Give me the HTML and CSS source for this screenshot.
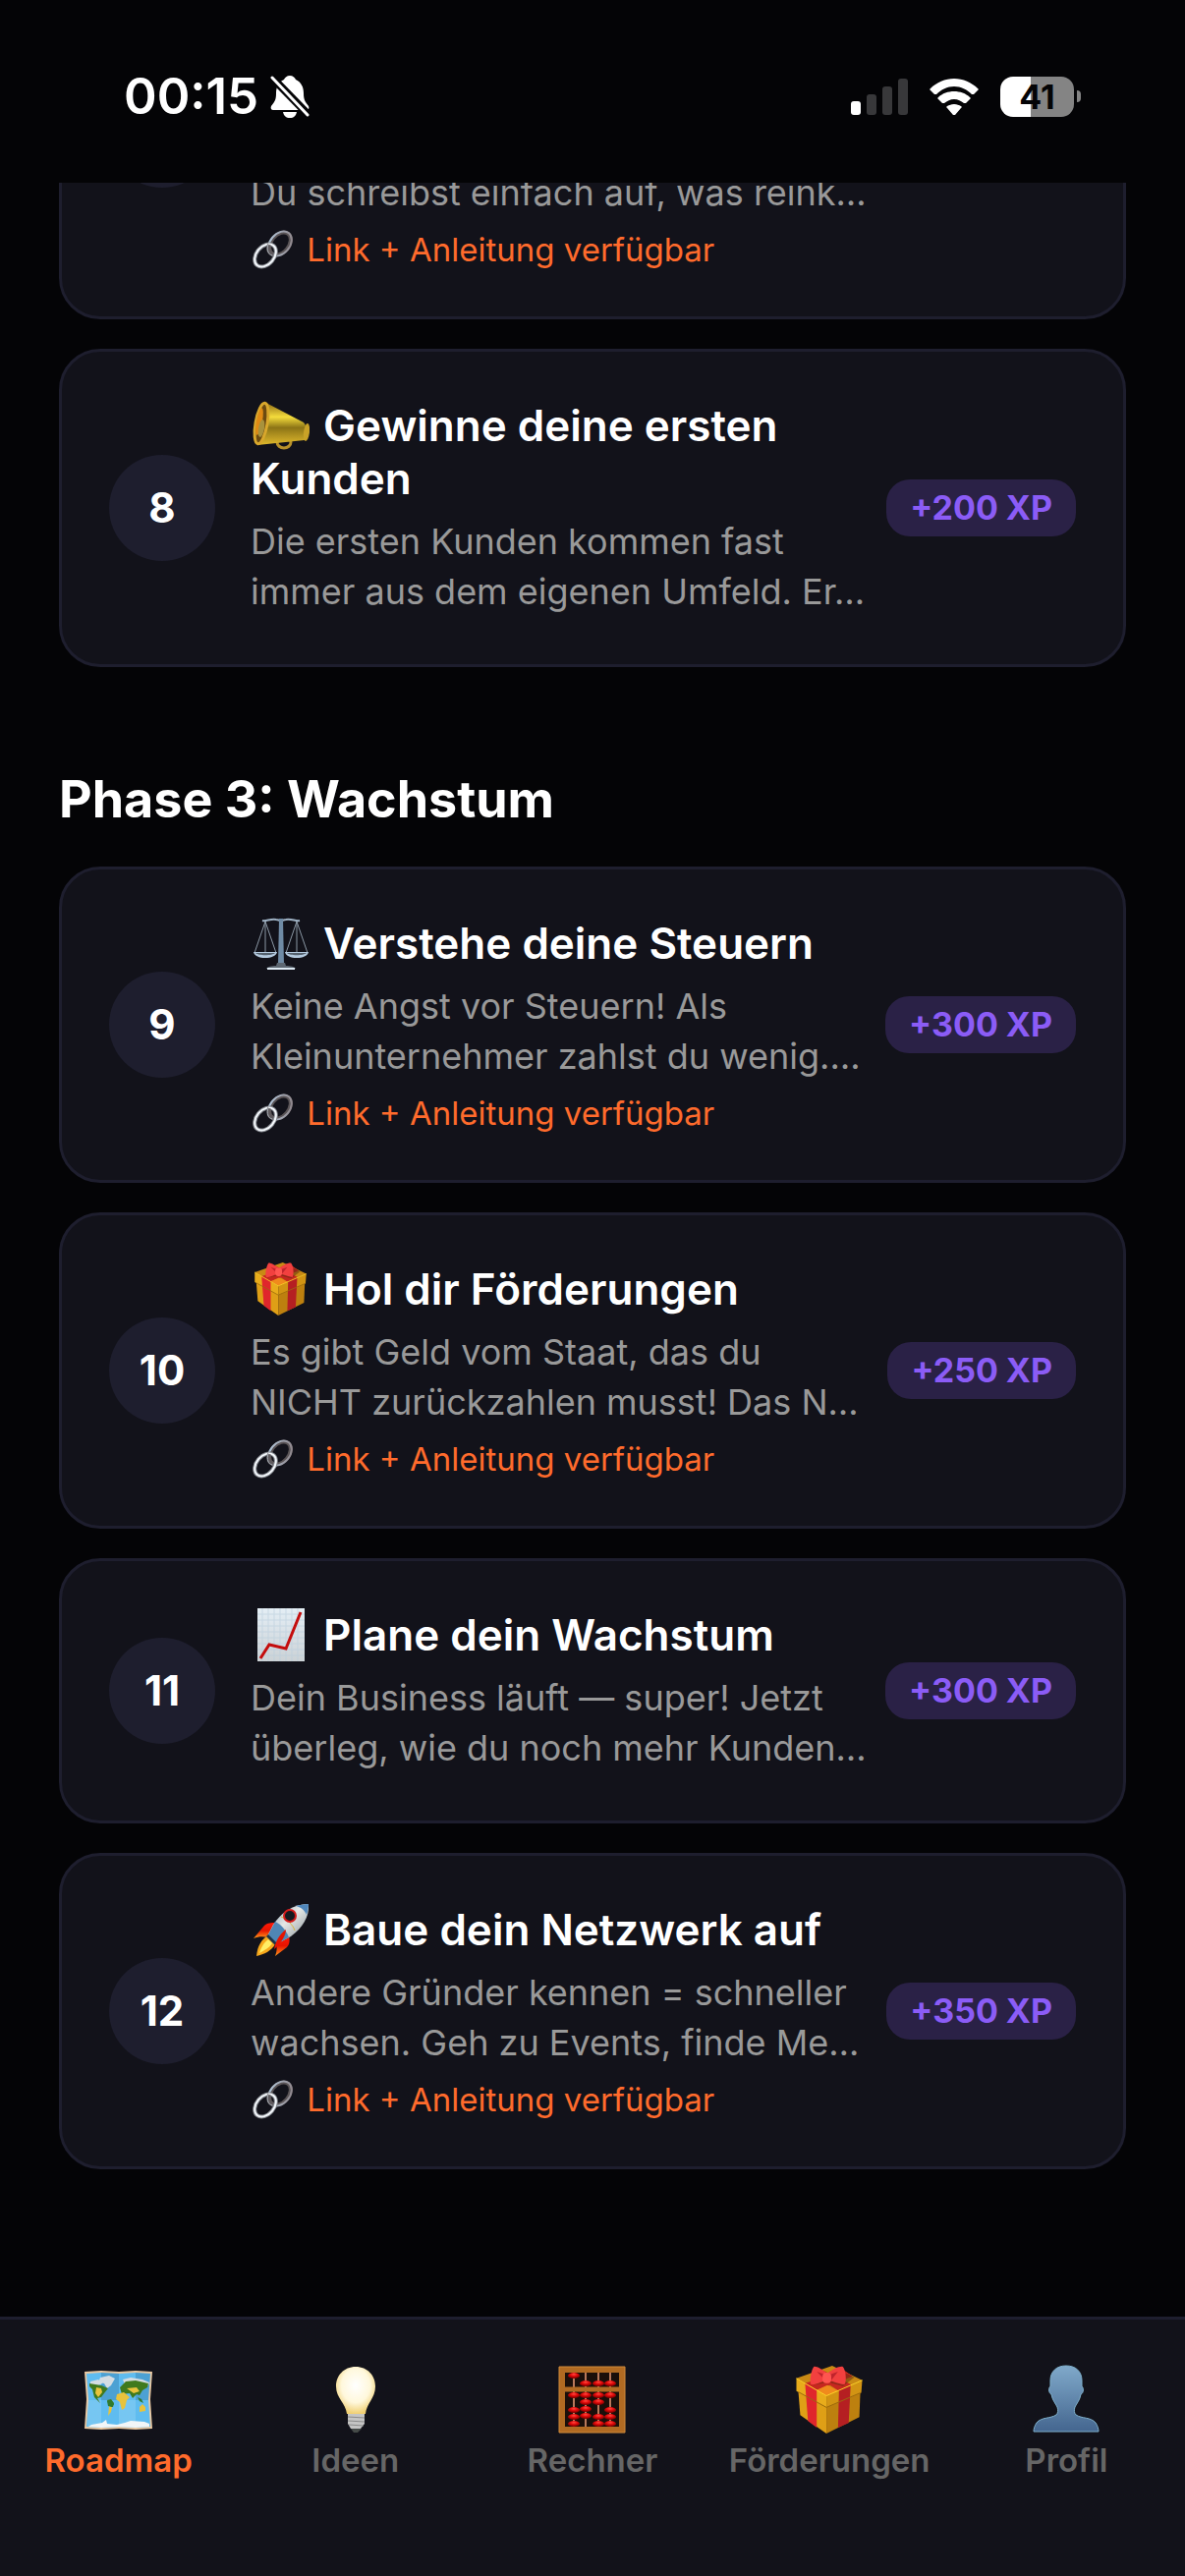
FILE: index.html
```html
<!DOCTYPE html>
<html lang="de">

<head>
    <meta charset="utf-8" />
    <title>Roadmap</title>
    <meta name="viewport" content="width=device-width, initial-scale=1">
    <link rel="stylesheet" href="styles.css">
</head>

<body>
    <!-- shared icons -->
    <svg class="sprite" aria-hidden="true">
        <defs>
            <linearGradient id="gold" x1="0" y1="0" x2="0" y2="1">
                <stop offset="0" stop-color="#8a6412" />
                <stop offset=".35" stop-color="#f4dc3c" />
                <stop offset=".6" stop-color="#8c7416" />
                <stop offset="1" stop-color="#e0b92c" />
            </linearGradient>
            <linearGradient id="steelDark" x1="0" y1="0" x2="1" y2="1">
                <stop offset="0" stop-color="#b9d3ea" />
                <stop offset="1" stop-color="#8a7d80" />
            </linearGradient>
            <linearGradient id="paper" x1="0" y1="0" x2="0" y2="1">
                <stop offset="0" stop-color="#e4eef5" />
                <stop offset="1" stop-color="#ccd2d6" />
            </linearGradient>
            <linearGradient id="hull" x1="0" y1="0" x2="1" y2="1">
                <stop offset="0" stop-color="#6f8ba6" />
                <stop offset=".45" stop-color="#e6e8e6" />
                <stop offset="1" stop-color="#7b8890" />
            </linearGradient>
            <linearGradient id="fin" x1="0" y1="0" x2="0" y2="1">
                <stop offset="0" stop-color="#ff1a08" />
                <stop offset=".5" stop-color="#e61400" />
                <stop offset="1" stop-color="#ff9a1a" />
            </linearGradient>
            <radialGradient id="glow" cx=".5" cy=".4" r=".6">
                <stop offset="0" stop-color="#ffffff" />
                <stop offset=".6" stop-color="#fff8dc" />
                <stop offset="1" stop-color="#f0cf72" />
            </radialGradient>
            <linearGradient id="person" x1="0" y1="0" x2="0" y2="1">
                <stop offset="0" stop-color="#80a9ca" />
                <stop offset="1" stop-color="#44668f" />
            </linearGradient>
            <radialGradient id="beadFill" cx=".5" cy=".3" r=".6">
                <stop offset="0" stop-color="#ff4a40" />
                <stop offset=".5" stop-color="#e30b0b" />
                <stop offset="1" stop-color="#8c0000" />
            </radialGradient>
        </defs>
        <symbol id="gift" viewBox="0 0 68 70">
            <path fill="#c98a14" d="M0 13 37 0 68 15 31 31z" />
            <path fill="#c6271f" d="M9 18 50 5 58 11 21 25z" />
            <path fill="#c6271f" d="M16 8 28 5 58 20 44 26z" />
            <path fill="#f08a1c" d="M21 25 32 20 44 26 31 31z" />
            <path fill="#df9f16" d="M2 26 31 42v28L4 51z" />
            <path fill="#bd800f" d="M31 42 66 28 65 53 31 70z" />
            <path fill="#e8ac1b" d="M0 13 31 31v12L0 26z" />
            <path fill="#d29413" d="M31 31 68 15 67 28 31 43z" />
            <path fill="#e0262c" d="M9 18 21 25v39l-9-7z" />
            <path fill="#b51f22" d="M44 25 56 20 54 59 43 64z" />
            <path fill="none" stroke="#ffd42a" d="M0 13 31 31 68 15" />
            <path fill="none" stroke="#9a690c" d="M2 27 31 43 66 28" />
            <path fill="#5b2a10" opacity=".5" d="M16 20 33 17 48 21 60 12 52 8z" />
            <path fill="#f2403f" d="M32 8C26 3 20 0 18 1c-2 2-5 14-3 18 3 2 11-3 17-4z" />
            <path fill="#f2403f" d="M32 8c6-5 13-8 16-7 3 3 4 15 2 18-4 1-11-3-18-4z" />
            <path fill="#c0242c" d="M32 10 21 6l8 8zM32 10l11-4-7 9z" />
            <rect fill="#ff5550" x="27" y="7" width="9" height="11" rx="4" />
        </symbol>
        <symbol id="link" viewBox="0 0 45 40">
            <g fill="none">
                <ellipse cx="30" cy="14" rx="13" ry="9" transform="rotate(-50 30 14)" stroke="#5a5456" stroke-width="4" />
                <ellipse cx="30" cy="14" rx="14" ry="10" transform="rotate(-50 30 14)" stroke="url(#steelDark)" stroke-width="2" />
                <ellipse cx="15" cy="26" rx="13" ry="9" transform="rotate(-50 15 26)" stroke="#85888f" stroke-width="4" />
                <ellipse cx="15" cy="26" rx="13" ry="9" transform="rotate(-50 15 26)" stroke="#f4f8fc" stroke-width="2" />
                <path stroke="#5f5a5e" stroke-width="4" d="M19 15c-2 5 0 9 4 10" />
                <path stroke="#a9b0b8" d="M18 15c-2 5 0 10 4 11" />
            </g>
        </symbol>
    </svg>

    <header class="status-bar">
        <div class="clock">
            <span>00:15</span>
            <svg class="bell" viewBox="0 0 40 44" aria-label="Stumm">
                <path fill="#fff" d="M20 1c3 0 5 2 6 4 6 3 8 8 8 14 0 7 2 9 5 13 1 2 0 4-2 4H3c-2 0-3-2-2-4 4-5 5-7 5-13C6 12 9 7 14 5c1-2 3-4 6-4z" />
                <path fill="#fff" d="M13 38h14c-1 4-3 6-7 6s-6-2-7-6z" />
                <path stroke="#040406" stroke-width="8" d="M0 1 41 43" />
                <path stroke="#fff" stroke-width="3" stroke-linecap="round" d="M2 3 38 41" />
            </svg>
        </div>
        <div class="status-icons">
            <svg class="signal" viewBox="0 0 58 37" aria-label="Empfang">
                <rect x="0" y="23" width="10" height="14" rx="3" fill="#fff" />
                <rect x="16" y="16" width="10" height="21" rx="3" fill="#38383a" />
                <rect x="32" y="8" width="10" height="29" rx="3" fill="#38383a" />
                <rect x="48" y="0" width="10" height="37" rx="3" fill="#38383a" />
            </svg>
            <svg class="wifi" viewBox="0 0 50 37" aria-label="WLAN">
                <path fill="#fff" d="M25 0c9 0 18 4 24 10 1 1 1 1 0 2l-4 4c-1 0-1 0-2 0C38 11 32 8 25 8S12 11 7 16c-1 0-1 0-2 0l-4-4c-1-1-1-1 0-2C7 4 16 0 25 0z" />
                <path fill="#fff" d="M25 13c6 0 12 2 16 6 1 1 1 1 0 2l-4 4c-1 0-1 0-2 0-3-2-6-4-10-4s-7 2-10 4c-1 0-1 0-2 0l-4-4c-1-1-1-1 0-2 4-4 10-6 16-6z" />
                <path fill="#fff" d="M25 26c3 0 5 1 7 2 1 1 1 1 0 2l-6 7c-1 0-1 0-2 0l-6-7c-1-1-1-1 0-2 2-1 4-2 7-2z" />
            </svg>
            <div class="battery"><span class="battery-level">41</span></div>
        </div>
    </header>

    <main class="roadmap">
        <a class="step step-scrolled" href="#step7">
            <span class="step-number"></span>
            <div class="step-body">
                <p>Du schreibst einfach auf, was reink…</p>
                <div class="step-link"><svg class="link-icon"><use href="#link" /></svg> Link + Anleitung verfügbar</div>
            </div>
        </a>
        <a class="step" href="#step8">
            <span class="step-number">8</span>
            <div class="step-body">
                <h3>
                    <svg class="title-icon" viewBox="0 0 60 54">
                        <ellipse cx="34" cy="44" rx="7" ry="6" fill="none" stroke="#b8912a" stroke-width="3" />
                        <path fill="url(#gold)" d="M14 3 54 24c4 4 4 13 1 18L7 47z" />
                        <ellipse cx="57" cy="34" rx="3" ry="9" fill="#c9a227" transform="rotate(7 57 34)" />
                        <ellipse cx="11" cy="25" rx="6" ry="21" fill="#6b4a10" stroke="#d8a72c" stroke-width="3" transform="rotate(10 11 25)" />
                        <ellipse cx="9" cy="23" rx="3" ry="14" fill="#e08a14" transform="rotate(10 9 23)" />
                        <ellipse cx="11" cy="30" rx="3" ry="9" fill="#a8923c" transform="rotate(10 11 30)" />
                    </svg>
                    Gewinne deine ersten Kunden
                </h3>
                <p>Die ersten Kunden kommen fast<br>immer aus dem eigenen Umfeld. Er…</p>
            </div>
            <span class="xp">+200 XP</span>
        </a>

        <h2>Phase 3: Wachstum</h2>

        <a class="step" href="#step9">
            <span class="step-number">9</span>
            <div class="step-body">
                <h3>
                    <svg class="title-icon" viewBox="0 0 60 54">
                        <g fill="none" stroke="#8b98a5">
                            <path stroke-width="2" stroke="#9fb2c4" d="M12 4c4 1 8-2 14-1 2 0 3 1 5 1s3-1 5-1c6-1 10 2 14 1" />
                            <path d="M15 5 4 37M15 5v32M15 5l11 32M47 5 36 37M47 5v32M47 5l11 32" />
                        </g>
                        <path fill="#6f8ba5" d="M29 2h4l1 47h-6z" />
                        <path fill="#b3c9de" d="M3 36h24c-1 4-6 6-12 6S4 40 3 36zM35 36h24c-1 4-6 6-12 6s-11-2-12-6z" />
                        <path fill="#54616e" d="M5 37h20c-3 3-17 3-20 0zM37 37h20c-3 3-17 3-20 0z" />
                        <path fill="#5d6772" d="M27 47h8l1 3c5 0 9 1 10 3H16c1-2 5-3 10-3z" />
                        <path stroke="#dce8f2" stroke-width="2" d="M17 53h28" />
                    </svg>
                    Verstehe deine Steuern
                </h3>
                <p>Keine Angst vor Steuern! Als<br>Kleinunternehmer zahlst du wenig.…</p>
                <div class="step-link"><svg class="link-icon"><use href="#link" /></svg> Link + Anleitung verfügbar</div>
            </div>
            <span class="xp">+300 XP</span>
        </a>
        <a class="step" href="#step10">
            <span class="step-number">10</span>
            <div class="step-body">
                <h3>
                    <svg class="title-icon" viewBox="0 0 60 54"><use href="#gift" x="3" y="0" width="55" height="54" /></svg>
                    Hol dir Förderungen
                </h3>
                <p>Es gibt Geld vom Staat, das du<br>NICHT zurückzahlen musst! Das N…</p>
                <div class="step-link"><svg class="link-icon"><use href="#link" /></svg> Link + Anleitung verfügbar</div>
            </div>
            <span class="xp">+250 XP</span>
        </a>
        <a class="step" href="#step11">
            <span class="step-number">11</span>
            <div class="step-body">
                <h3>
                    <svg class="title-icon" viewBox="0 0 60 54">
                        <rect x="7" y="0" width="48" height="54" fill="url(#paper)" />
                        <path stroke="#b9cedd" opacity=".6" d="M12 0v54M18 0v54M24 0v54M30 0v54M36 0v54M42 0v54M48 0v54M7 6h48M7 12h48M7 18h48M7 24h48M7 30h48M7 36h48M7 42h48M7 48h48" />
                        <path fill="none" stroke="#c40d0d" stroke-width="3" d="M10 51 19 37 36 41 51 4" />
                    </svg>
                    Plane dein Wachstum
                </h3>
                <p>Dein Business läuft — super! Jetzt<br>überleg, wie du noch mehr Kunden…</p>
            </div>
            <span class="xp">+300 XP</span>
        </a>
        <a class="step" href="#step12">
            <span class="step-number">12</span>
            <div class="step-body">
                <h3>
                    <svg class="title-icon" viewBox="0 0 60 54">
                        <path fill="url(#fin)" d="M26 20c-5 0-9 0-12 3L3 36c5-2 10-2 14-1z" />
                        <path fill="url(#fin)" d="M39 33c1 5 1 9-2 12l-12 9c2-5 2-9 1-13z" />
                        <path fill="#f6a81c" d="M17 34c-6 3-10 10-11 20 8-2 15-5 19-12z" />
                        <path fill="#ffee66" d="M18 37c-5 4-7 8-9 14 5-3 10-5 13-10z" />
                        <path fill="url(#hull)" d="M59 1c1 13-6 24-18 33l-15 8-9-8 6-12C31 10 43 1 59 1z" />
                        <path fill="#4f86bb" d="M59 1c0 4-1 8-2 11-2-5-6-8-11-9 4-1 8-2 13-2z" />
                        <path fill="#4f86b5" d="M25 19c5 2 11 8 14 16l-13 7-9-8z" />
                        <path fill="#1e3347" d="M18 32l9 9-2 2-9-9z" />
                        <path fill="none" stroke="#d8b23c" d="M31 14c6 2 12 8 14 14" />
                        <circle cx="40" cy="13" r="6" fill="#151a20" stroke="#d31b1b" stroke-width="2" />
                        <path fill="#e61400" d="M36 27c0 6-5 14-12 20 1-7 5-15 12-20z" />
                    </svg>
                    Baue dein Netzwerk auf
                </h3>
                <p>Andere Gründer kennen = schneller<br>wachsen. Geh zu Events, finde Me…</p>
                <div class="step-link"><svg class="link-icon"><use href="#link" /></svg> Link + Anleitung verfügbar</div>
            </div>
            <span class="xp">+350 XP</span>
        </a>
    </main>

    <nav class="tabs">
        <a class="tab active" href="#roadmap">
            <svg viewBox="0 0 72 72">
                <path fill="#e8c9a4" d="M1 8l17-1 18 1 17-1 17 1-2 28 2 30-17 1-17-1-18 1-17-1 2-30z" />
                <path fill="#5fbcf0" d="M3 10l15-1 18 1 17-1 15 1-2 26 2 28-15 1-17-1-18 1-15-1 2-28z" />
                <path fill="#2b6f9e" opacity=".35" d="M18 9l18 1v27H18zM53 9l15 1-2 27H53z" />
                <path fill="#ffffff" opacity=".15" d="M4 37h14v27H4zM36 37h17v28l-17-1z" />
                <path fill="#d5dde2" d="M17 14l9-2 6 3-4 7-4 3-3-5-6-1zM7 18l8-2 4 4-6 3-6-1zM40 16l8-2 12 2 7 3-1 3-24-1z" />
                <path fill="#3f7a1e" d="M6 20l12 2 7 3-4 5-3 4-4 1 3 5-6-6-2-8-3-3zM37 24l6-6 10-1 13 3-1 4-5 3-3 5-3-1-4 4-3-5-8 1zM24 37l4-1 3 4-1 4-4-1z" />
                <path fill="#e8c33c" d="M13 24l5 1 1 4-4 5-3-4zM34 31l7-2 6 5-3 3-2 8-3 2-2-8-4-3zM26 43l3 1-1 5-3 4zM57 44l3-3 3 3v4l-6 1zM44 25l10-1 3 4-6 2z" />
                <path fill="#2f7a2c" d="M24 38l4-1 3 4-2 3-4-1zM55 34l4 2 2 4-4-2z" />
                <path fill="#f2f6f8" d="M8 62l11-2 4-3 1 4 10 1 8-2 6-2 14 1 5 2v3l-14 1-17-1-18 1-13-1z" />
            </svg>
            <span>Roadmap</span>
        </a>
        <a class="tab" href="#ideen">
            <svg viewBox="0 0 72 72">
                <path fill="url(#glow)" d="M36 3c12 0 20 9 20 20 0 12-9 17-10 28H27C26 40 16 35 16 23 16 12 24 3 36 3z" />
                <path fill="#c4c4c4" d="M28 51h17v10l-4 5H31l-3-5z" />
                <path stroke="#8a8a8a" stroke-width="1" d="M28 54l17 1M28 58l17 1M29 62l15 1" />
                <path fill="#454a48" d="M31 66h11l-4 4h-4z" />
            </svg>
            <span>Ideen</span>
        </a>
        <a class="tab" href="#rechner">
            <svg viewBox="0 0 72 72">
                <rect x="5" y="6" width="61" height="61" fill="#1a0f0a" stroke="#b06a22" stroke-width="6" />
                <path stroke="#d08a3a" fill="none" d="M2 3h67v67H2z" />
                <path stroke="#b9785a" stroke-width="2" d="M17 9v55M29 9v55M42 9v55M54 9v55" />
                <path stroke="#b06a22" stroke-width="5" d="M8 26h55" />
                <g fill="url(#beadFill)">
                    <ellipse cx="17" cy="12" rx="6" ry="3" />
                    <ellipse cx="29" cy="20" rx="6" ry="3" />
                    <ellipse cx="42" cy="20" rx="6" ry="3" />
                    <ellipse cx="54" cy="20" rx="6" ry="3" />
                    <ellipse cx="17" cy="32" rx="6" ry="3" />
                    <ellipse cx="17" cy="47" rx="6" ry="3" />
                    <ellipse cx="17" cy="54" rx="6" ry="3" />
                    <ellipse cx="17" cy="61" rx="6" ry="3" />
                    <ellipse cx="29" cy="32" rx="6" ry="3" />
                    <ellipse cx="29" cy="39" rx="6" ry="3" />
                    <ellipse cx="29" cy="46" rx="6" ry="3" />
                    <ellipse cx="29" cy="53" rx="6" ry="3" />
                    <ellipse cx="42" cy="32" rx="6" ry="3" />
                    <ellipse cx="42" cy="39" rx="6" ry="3" />
                    <ellipse cx="42" cy="54" rx="6" ry="3" />
                    <ellipse cx="42" cy="61" rx="6" ry="3" />
                    <ellipse cx="54" cy="32" rx="6" ry="3" />
                    <ellipse cx="54" cy="47" rx="6" ry="3" />
                    <ellipse cx="54" cy="54" rx="6" ry="3" />
                    <ellipse cx="54" cy="61" rx="6" ry="3" />
                </g>
            </svg>
            <span>Rechner</span>
        </a>
        <a class="tab" href="#foerderungen">
            <svg viewBox="0 0 72 72"><use href="#gift" x="2" y="2" width="68" height="69" /></svg>
            <span>Förderungen</span>
        </a>
        <a class="tab" href="#profil">
            <svg viewBox="0 0 72 72">
                <path fill="url(#person)" stroke="#7fb0cc" stroke-width="1" d="M36 2c10 0 16 6 16 15v6c2 1 2 7-1 8-1 6-4 9-6 13-1 3-1 6 1 8 6 4 15 2 20 8 2 3 3 6 3 9H3c0-3 1-6 3-9 5-6 14-4 20-8 2-2 2-5 1-8-2-4-5-7-6-13-3-1-3-7-1-8v-6c0-9 6-15 16-15z" />
            </svg>
            <span>Profil</span>
        </a>
    </nav>
</body>

</html>
```
FILE: styles.css
```css
* {
    box-sizing: border-box;
}

body {
    margin: 0;
    height: 100vh;
    display: flex;
    flex-direction: column;
    background: #040406;
    color: #fff;
    font-family: Inter, "Liberation Sans", sans-serif;
}

a {
    color: inherit;
    text-decoration: none;
}

h2, h3, p {
    margin: 0;
}

.sprite {
    position: absolute;
    width: 0;
    height: 0;
}

.status-bar {
    flex: none;
    display: flex;
    justify-content: space-between;
    align-items: flex-start;
    height: 186px;
    padding: 68px 106px 0 126px;
}

.clock {
    display: flex;
    align-items: center;
    gap: 12px;
    font-size: 51px;
    line-height: 60px;
    font-weight: 600;
}

.bell {
    width: 40px;
    height: 44px;
}

.status-icons {
    display: flex;
    align-items: center;
    gap: 22px;
    height: 60px;
}

.signal {
    width: 58px;
    height: 37px;
}

.wifi {
    width: 50px;
    height: 37px;
}

.battery {
    display: flex;
    align-items: center;
}

.battery-level {
    width: 75px;
    border-radius: 13px;
    background: linear-gradient(90deg, #fff 41%, #848484 41%);
    color: #040406;
    font-size: 34px;
    line-height: 41px;
    font-weight: 700;
    text-align: center;
}

.battery::after {
    content: "";
    width: 4px;
    height: 12px;
    margin-left: 3px;
    border-radius: 0 4px 4px 0;
    background: #848484;
}

/* list is scrolled to its end */
.roadmap {
    flex: 1;
    min-height: 0;
    overflow: hidden;
    display: flex;
    flex-direction: column;
    justify-content: flex-end;
    gap: 30px;
    padding: 0 60px 150px;
}

.roadmap h2 {
    margin: 72px 0 5px;
    font-size: 52px;
    line-height: 66px;
    font-weight: 700;
}

.step {
    flex: none;
    display: flex;
    align-items: center;
    padding: 48px;
    border: 3px solid #1e1e2e;
    border-radius: 42px;
    background: #12121a;
}

/* upper part is out of view */
.step-scrolled {
    min-height: 376px;
}

.step-scrolled .step-body {
    align-self: flex-end;
}

.step-number {
    flex: none;
    width: 108px;
    height: 108px;
    margin-right: 36px;
    border-radius: 50%;
    background: #1e1e2e;
    font-size: 42px;
    line-height: 108px;
    font-weight: 700;
    text-align: center;
}

.step-body {
    flex: 1;
    min-width: 0;
}

.step-body h3 {
    font-size: 44px;
    line-height: 54px;
    font-weight: 600;
}

.title-icon {
    width: 60px;
    height: 54px;
    margin-right: 3px;
    vertical-align: top;
}

.step-body p {
    margin-top: 12px;
    color: #999;
    font-size: 36px;
    line-height: 51px;
    white-space: nowrap;
}

.step-link {
    margin-top: 12px;
    color: #ff6b2c;
    font-size: 33px;
    line-height: 40px;
}

.link-icon {
    width: 45px;
    height: 40px;
    margin-right: 3px;
    vertical-align: top;
}

.xp {
    flex: none;
    margin-left: 24px;
    padding: 9px 24px;
    border-radius: 24px;
    background: #2a2146;
    color: #8b5cf6;
    font-size: 34px;
    line-height: 40px;
    font-weight: 700;
}

.tabs {
    flex: none;
    display: grid;
    grid-template-columns: repeat(5, 1fr);
    padding: 45px 0 98px;
    border-top: 3px solid #1e1e2e;
    background: #12121a;
}

.tab {
    display: flex;
    flex-direction: column;
    align-items: center;
    gap: 6px;
    color: #666;
    font-size: 33px;
    line-height: 40px;
    font-weight: 600;
}

.tab svg {
    width: 72px;
    height: 72px;
}

.tab.active {
    color: #ff6b2c;
}
```
